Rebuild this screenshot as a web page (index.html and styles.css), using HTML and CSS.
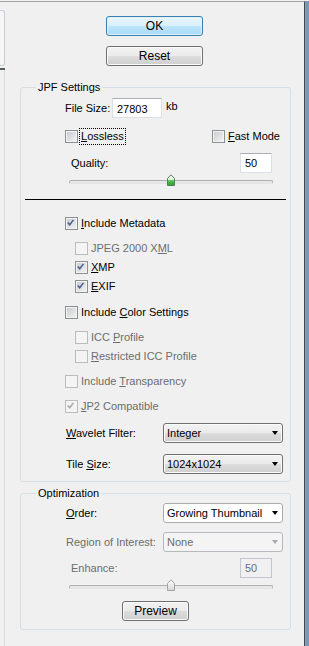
FILE: index.html
```html
<!DOCTYPE html>
<html lang="en">
<head>
    <meta charset="UTF-8">
    <meta name="viewport" content="width=device-width, initial-scale=1.0">
    <title>JPF Settings</title>
    <link rel="stylesheet" href="styles.css">
</head>
<body>
    <div class="frame">
        <div class="side">
            <div class="side-tab"></div>
            <div class="side-rule"></div>
            <div class="side-rest"></div>
        </div>
        <div class="panel">
            <div class="actions">
                <button class="btn btn-default">OK</button>
                <button class="btn">Reset</button>
            </div>

            <fieldset class="group group-jpf">
                <legend>JPF Settings</legend>
                <div class="row row-size">
                    <span class="lbl-size">File Size:</span>
                    <span class="field field-size">27803</span>
                    <span class="unit">kb</span>
                </div>
                <div class="row row-mode">
                    <div class="mode-left">
                        <label class="check"><span class="box"></span><span class="text focus"><u>L</u>ossless</span></label>
                    </div>
                    <label class="check"><span class="box"></span><span class="text"><u>F</u>ast Mode</span></label>
                </div>
                <div class="row row-value">
                    <span class="lbl-value">Quality:</span>
                    <span class="field field-value">50</span>
                </div>
                <div class="slider">
                    <div class="track"></div>
                    <svg class="thumb" style="left: 50%;" width="8" height="12" viewBox="0 0 8 12">
                        <defs>
                            <linearGradient id="thumb-on" x1="0" y1="0" x2="0" y2="1">
                                <stop offset="0" stop-color="#ffffff"/>
                                <stop offset="0.45" stop-color="#d8f2d8"/>
                                <stop offset="0.55" stop-color="#52c252"/>
                                <stop offset="1" stop-color="#2f9e2f"/>
                            </linearGradient>
                        </defs>
                        <path d="M0.5 4.5 L4 0.8 L7.5 4.5 V11.5 H0.5 Z" fill="url(#thumb-on)" stroke="#5b7d5b"/>
                    </svg>
                </div>
                <div class="sep"></div>

                <label class="check check-line first"><span class="box"><svg viewBox="0 0 13 13"><path d="M3 6.2 L5.4 9 L9.8 3.2" /></svg></span><span class="text"><u>I</u>nclude Metadata</span></label>
                <label class="check check-line sub sub-first off"><span class="box"></span><span class="text">JPEG 2000 X<u>M</u>L</span></label>
                <label class="check check-line sub"><span class="box"><svg viewBox="0 0 13 13"><path d="M3 6.2 L5.4 9 L9.8 3.2" /></svg></span><span class="text"><u>X</u>MP</span></label>
                <label class="check check-line sub"><span class="box"><svg viewBox="0 0 13 13"><path d="M3 6.2 L5.4 9 L9.8 3.2" /></svg></span><span class="text"><u>E</u>XIF</span></label>

                <label class="check check-line section"><span class="box"></span><span class="text">Include <u>C</u>olor Settings</span></label>
                <label class="check check-line sub sub-first off"><span class="box"></span><span class="text">ICC <u>P</u>rofile</span></label>
                <label class="check check-line sub off"><span class="box"></span><span class="text"><u>R</u>estricted ICC Profile</span></label>

                <label class="check check-line off"><span class="box"></span><span class="text">Include <u>T</u>ransparency</span></label>
                <label class="check check-line off"><span class="box"><svg viewBox="0 0 13 13"><path d="M3 6.2 L5.4 9 L9.8 3.2" /></svg></span><span class="text"><u>J</u>P2 Compatible</span></label>

                <div class="row select-row select-first">
                    <span class="lbl-select"><u>W</u>avelet Filter:</span>
                    <div class="select"><span>Integer</span><span class="arrow"></span></div>
                </div>
                <div class="row select-row">
                    <span class="lbl-select">Tile <u>S</u>ize:</span>
                    <div class="select"><span>1024x1024</span><span class="arrow"></span></div>
                </div>
            </fieldset>

            <fieldset class="group group-opt">
                <legend>Optimization</legend>
                <div class="row select-row order-row">
                    <span class="lbl-select"><u>O</u>rder:</span>
                    <div class="select select-plain"><span>Growing Thumbnail</span><span class="arrow"></span></div>
                </div>
                <div class="row select-row region-row off">
                    <span class="lbl-select">Region of Interest:</span>
                    <div class="select select-off"><span>None</span><span class="arrow"></span></div>
                </div>
                <div class="row row-value enhance-row off">
                    <span class="lbl-value">Enhance:</span>
                    <span class="field field-value field-off">50</span>
                </div>
                <div class="slider">
                    <div class="track"></div>
                    <svg class="thumb" style="left: 50%;" width="8" height="12" viewBox="0 0 8 12">
                        <defs>
                            <linearGradient id="thumb-off" x1="0" y1="0" x2="0" y2="1">
                                <stop offset="0" stop-color="#ffffff"/>
                                <stop offset="1" stop-color="#d6d6d6"/>
                            </linearGradient>
                        </defs>
                        <path d="M0.5 4.5 L4 0.8 L7.5 4.5 V11.5 H0.5 Z" fill="url(#thumb-off)" stroke="#a3a3a3"/>
                    </svg>
                </div>
                <div class="preview-wrap">
                    <button class="btn btn-preview">Preview</button>
                </div>
            </fieldset>
        </div>
        <div class="edge"></div>
    </div>
</body>
</html>
```

FILE: styles.css
```css
body {
    margin: 0;
    background-color: #f0f0f0;
    font-family: "Liberation Sans", Arial, sans-serif;
    font-size: 11px;
    line-height: 13px;
    color: #000;
}
.frame {
    display: flex;
    height: 645px;
    margin-top: 1px;
}
.side {
    width: 5px;
    border-top: 1px solid #a3a3a3;
    display: flex;
    flex-direction: column;
}
.side-tab {
    margin-top: 8px;
    height: 56px;
    box-sizing: border-box;
    border: 1px solid #c3d0dc;
    border-left: 0;
    border-radius: 0 3px 3px 0;
    background-color: #f6f6f6;
}
.side-rule {
    margin-top: 2px;
    height: 2px;
    background-color: #5c5c5c;
}
.side-rest {
    flex: 1;
    border-right: 1px solid #d9d9d9;
}
.panel {
    width: 299px;
    border-top: 1px solid #a3a3a3;
    border-right: 1px solid #414950;
}
.edge {
    flex: 1;
    background-color: #7898bb;
    border-left: 1px solid #8d9cab;
}

/* buttons */
.actions {
    display: flex;
    flex-direction: column;
    align-items: center;
    gap: 10px;
    padding-top: 14px;
}
.btn {
    width: 97px;
    height: 20px;
    box-sizing: border-box;
    padding: 0;
    border: 1px solid #707070;
    border-radius: 3px;
    background: linear-gradient(#f2f2f2, #ebebeb 50%, #dddddd 50%, #cfcfcf);
    box-shadow: inset 0 0 0 1px #fbfbfb;
    font-family: inherit;
    font-size: 12px;
    color: #000;
}
.btn-default {
    border-color: #3c7fb1;
    background: linear-gradient(#eaf6fd, #d9f0fc 50%, #bee6fd 50%, #a7d9f5);
    box-shadow: inset 0 0 0 1px #dff2fc;
}
.btn-preview {
    width: 67px;
}

/* group boxes */
.group {
    margin: 14px 13px 0 15px;
    padding: 0 0 7px;
    min-width: 0;
    border: 1px solid #d5dfe5;
    border-radius: 3px;
}
.group legend {
    margin-left: 15px;
    padding: 0 2px;
    line-height: 15px;
}
.group-opt {
    margin-top: 4px;
    padding-bottom: 8px;
}

.row {
    display: flex;
    align-items: center;
}
.row-size {
    margin-top: 3px;
    height: 20px;
    padding-left: 44px;
}
.lbl-size {
    width: 47px;
}
.field {
    box-sizing: border-box;
    height: 20px;
    display: flex;
    align-items: center;
    padding: 0 4px;
    border: 1px solid #dbdfe6;
    border-top-color: #abadb3;
    background-color: #fff;
}
.field-size {
    width: 50px;
    padding-top: 3px;
}
.unit {
    margin-left: 4px;
    margin-top: -4px;
}
.row-mode {
    margin-top: 12px;
    height: 13px;
    padding-left: 44px;
}
.mode-left {
    width: 147px;
}
.row-value {
    margin-top: 10px;
    height: 20px;
    padding-left: 50px;
}
.lbl-value {
    width: 169px;
}
.field-value {
    width: 32px;
}
.field-off {
    background-color: #f0f0f0;
    border-color: #c3c7cb;
}

/* slider */
.slider {
    position: relative;
    box-sizing: border-box;
    width: 204px;
    height: 12px;
    margin: 1px 0 0 48px;
    padding-top: 6px;
}
.track {
    height: 4px;
    box-sizing: border-box;
    border: 1px solid #b0b0b0;
    border-bottom-color: #e4e4e4;
    border-radius: 2px;
    background-color: #e7e7e7;
}
.thumb {
    position: absolute;
    top: 0;
    margin-left: -4px;
}
.sep {
    margin: 13px 0 0 4px;
    width: 261px;
    height: 1px;
    background-color: #000;
}

/* checkboxes */
.check {
    display: flex;
    align-items: center;
    gap: 3px;
    height: 13px;
}
.box {
    width: 13px;
    height: 13px;
    box-sizing: border-box;
    border: 1px solid #8e8f8f;
    background: linear-gradient(135deg, #c6cad0, #f4f4f4);
    box-shadow: inset 0 0 0 1px #f3f3f3;
}
.box svg {
    display: block;
    width: 11px;
    height: 11px;
    margin: 0;
}
.box path {
    fill: none;
    stroke: #4b5d91;
    stroke-width: 1.8;
    transform: translate(-1px, -1px);
}
.text.focus {
    outline: 1px dotted #000;
    outline-offset: 1px;
}
.check-line {
    margin-top: 12px;
    padding-left: 44px;
}
.check-line.first {
    margin-top: 17px;
}
.check-line.section {
    margin-top: 13px;
}
.check-line.sub {
    margin-top: 6px;
    padding-left: 54px;
}
.check-line.sub-first {
    margin-top: 12px;
}
.off {
    color: #6d6d6d;
}
.off .box {
    border-color: #bcbcbc;
    background: #f4f4f4;
    box-shadow: none;
}
.off .box path {
    stroke: #a8a8a8;
}

/* drop downs */
.select-row {
    margin-top: 11px;
    height: 20px;
    padding-left: 45px;
}
.select-first {
    margin-top: 10px;
}
.lbl-select {
    width: 97px;
}
.select {
    width: 120px;
    height: 20px;
    box-sizing: border-box;
    display: flex;
    align-items: center;
    padding: 0 4px 0 3px;
    border: 1px solid #707070;
    border-radius: 3px;
    background: linear-gradient(#f2f2f2, #ebebeb 50%, #dddddd 50%, #cfcfcf);
    box-shadow: inset 0 0 0 1px #fbfbfb;
}
.arrow {
    margin-left: auto;
    width: 0;
    height: 0;
    border-left: 3.5px solid transparent;
    border-right: 3.5px solid transparent;
    border-top: 4px solid #000;
}
.select-plain {
    background: #fff;
    border-color: #acacac;
    box-shadow: none;
}
.select-off {
    background: #f4f4f4;
    border-color: #b5b9bd;
    box-shadow: none;
}
.select-off .arrow {
    border-top-color: #a8a8a8;
}
.order-row {
    margin-top: 2px;
}
.region-row {
    margin-top: 9px;
}
.enhance-row {
    margin-top: 6px;
}
.preview-wrap {
    display: flex;
    justify-content: center;
    margin-top: 10px;
}
```
